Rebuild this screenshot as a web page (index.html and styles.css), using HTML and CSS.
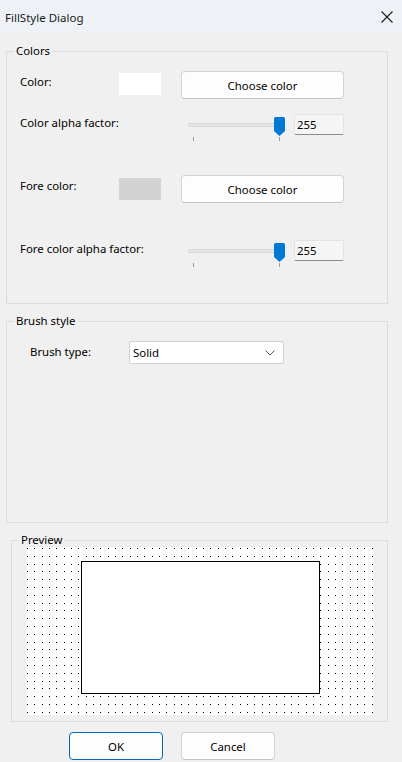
FILE: index.html
```html
<!DOCTYPE html>
<html>
<head>
<meta charset="utf-8">
<link rel="stylesheet" href="styles.css">
</head>
<body>
<div class="window">
  <div class="titlebar">
    <span class="title">FillStyle Dialog</span>
    <svg class="close" width="12" height="12" viewBox="0 0 12 12"><path d="M0.5 0.5 L11.5 11.5 M11.5 0.5 L0.5 11.5" stroke="#1b1b1b" stroke-width="1.1" fill="none"/></svg>
  </div>
  <div class="content">
    <div class="group colors">
      <span class="legend">Colors</span>
      <div class="row row1">
        <span class="label">Color:</span>
        <span class="swatch white"></span>
        <button class="btn choose">Choose color</button>
      </div>
      <div class="row row2">
        <span class="label">Color alpha factor:</span>
        <div class="slider">
          <span class="track"></span>
          <span class="tick t1"></span>
          <span class="tick t2"></span>
          <svg class="thumb" width="11" height="19" viewBox="0 0 11 19"><path d="M0 1.5 Q0 0 1.5 0 H9.5 Q11 0 11 1.5 V14 L5.5 19 L0 14 Z" fill="#0078d4"/></svg>
        </div>
        <span class="numbox">255</span>
      </div>
      <div class="row row3">
        <span class="label">Fore color:</span>
        <span class="swatch gray"></span>
        <button class="btn choose">Choose color</button>
      </div>
      <div class="row row4">
        <span class="label">Fore color alpha factor:</span>
        <div class="slider">
          <span class="track"></span>
          <span class="tick t1"></span>
          <span class="tick t2"></span>
          <svg class="thumb" width="11" height="19" viewBox="0 0 11 19"><path d="M0 1.5 Q0 0 1.5 0 H9.5 Q11 0 11 1.5 V14 L5.5 19 L0 14 Z" fill="#0078d4"/></svg>
        </div>
        <span class="numbox">255</span>
      </div>
    </div>

    <div class="group brush">
      <span class="legend">Brush style</span>
      <div class="row brushrow">
        <span class="label">Brush type:</span>
        <div class="combo">
          <span>Solid</span>
          <svg width="10" height="6" viewBox="0 0 10 6"><path d="M0.5 0.5 L5 5 L9.5 0.5" stroke="#5a5a5a" stroke-width="1" fill="none"/></svg>
        </div>
      </div>
    </div>

    <div class="group preview">
      <span class="legend">Preview</span>
      <div class="canvas">
        <svg class="dots" width="346" height="168">
          <defs>
            <pattern id="dotpat" x="0" y="1" width="22" height="39" patternUnits="userSpaceOnUse">
              <rect x="0" y="0" width="1" height="1" fill="#000"/>
              <rect x="7" y="0" width="1" height="1" fill="#000"/>
              <rect x="15" y="0" width="1" height="1" fill="#000"/>
              <rect x="0" y="8" width="1" height="1" fill="#000"/>
              <rect x="7" y="8" width="1" height="1" fill="#000"/>
              <rect x="15" y="8" width="1" height="1" fill="#000"/>
              <rect x="0" y="16" width="1" height="1" fill="#000"/>
              <rect x="7" y="16" width="1" height="1" fill="#000"/>
              <rect x="15" y="16" width="1" height="1" fill="#000"/>
              <rect x="0" y="23" width="1" height="1" fill="#000"/>
              <rect x="7" y="23" width="1" height="1" fill="#000"/>
              <rect x="15" y="23" width="1" height="1" fill="#000"/>
              <rect x="0" y="31" width="1" height="1" fill="#000"/>
              <rect x="7" y="31" width="1" height="1" fill="#000"/>
              <rect x="15" y="31" width="1" height="1" fill="#000"/>
            </pattern>
          </defs>
          <rect x="0" y="0" width="346" height="168" fill="url(#dotpat)" shape-rendering="crispEdges"/>
        </svg>
        <div class="rect"></div>
      </div>
    </div>

    <div class="buttons">
      <button class="btn dlg ok">OK</button>
      <button class="btn dlg">Cancel</button>
    </div>
  </div>
</div>
</body>
</html>
```
FILE: styles.css
```css
* { box-sizing: border-box; }
html, body {
  margin: 0;
  padding: 0;
  background: #f0f0f0;
}
body {
  font-family: "Noto Sans", "Liberation Sans", sans-serif;
  font-size: 11.4px;
  color: #000;
}
.window {
  width: 402px;
  height: 762px;
  overflow: hidden;
  background: #f0f0f0;
}
.titlebar {
  height: 32px;
  background: #eef2f6;
  display: flex;
  align-items: center;
  justify-content: space-between;
  padding: 0 9px 0 5px;
}
.title {
  color: #1a1a1a;
  font-size: 11.5px;
  margin-top: 2px;
}
.close { margin-top: 1px; }
.content {
  padding: 19px 0 0 6px;
}
.group {
  position: relative;
  border: 1px solid #dcdcdc;
  width: 382px;
}
.legend {
  position: absolute;
  top: -10px;
  left: 7px;
  padding: 0 2px;
  background: #f0f0f0;
  line-height: 18px;
}
.colors {
  height: 253px;
  padding-left: 13px;
}
.row {
  display: flex;
  align-items: flex-start;
}
.label {
  width: 99px;
  line-height: 16px;
  flex: none;
  white-space: nowrap;
}
.row1 { margin-top: 19px; }
.row1 .label, .row3 .label { margin-top: 3px; }
.row2 { margin-top: 14px; }
.row3 { margin-top: 34px; }
.row4 { margin-top: 36px; }
.row2 .label, .row4 .label { margin-top: 2px; }
.swatch {
  width: 42px;
  height: 22px;
  flex: none;
  margin-right: 20px;
}
.swatch.white { background: #ffffff; margin-top: 2px; }
.swatch.gray { background: #d3d3d3; margin-top: 3px; }
.btn {
  font-family: inherit;
  font-size: 11.4px;
  color: #000;
  background: #fdfdfd;
  border: 1px solid #d3d3d3;
  border-bottom-color: #c4c4c4;
  border-radius: 4px;
  padding: 0;
  height: 28px;
}
.choose { width: 163px; }
.slider {
  position: relative;
  width: 100px;
  height: 28px;
  margin-left: 69px;
  flex: none;
}
.track {
  position: absolute;
  left: 0;
  top: 10px;
  width: 96px;
  height: 4px;
  background: #e7e7e7;
  border: 1px solid #d8d8d8;
  border-radius: 2px;
}
.tick {
  position: absolute;
  top: 24px;
  width: 1px;
  height: 4px;
  background: #9c9c9c;
}
.t1 { left: 5px; }
.t2 { left: 91px; }
.thumb {
  position: absolute;
  left: 86px;
  top: 4px;
}
.numbox {
  margin-left: 6px;
  margin-top: 1px;
  width: 50px;
  height: 21px;
  background: #f5f5f5;
  border: 1px solid #e3e3e3;
  border-bottom: 1px solid #8c8c8c;
  border-radius: 2px;
  padding: 0 0 0 2px;
  line-height: 19px;
}
.brush {
  margin-top: 17px;
  height: 202px;
  padding-left: 23px;
}
.brushrow { margin-top: 19px; }
.brushrow .label { margin-top: 3px; }
.combo {
  width: 155px;
  height: 23px;
  background: #fff;
  border: 1px solid #d0d0d0;
  border-radius: 2px;
  display: flex;
  align-items: center;
  justify-content: space-between;
  padding: 0 8px 0 3px;
}
.combo svg { margin-top: 1px; }
.preview {
  margin-top: 17px;
  margin-left: 5px;
  width: 377px;
  height: 182px;
  padding: 6px 14px 0 15px;
}
.canvas {
  position: relative;
  height: 168px;
  background-color: #fff;
  padding: 14px 0 0 54px;
}
.dots {
  position: absolute;
  left: 0;
  top: 0;
}
.rect {
  position: relative;
  width: 239px;
  height: 133px;
  background: #fff;
  border: 1.5px solid #000;
}
.buttons {
  display: flex;
  gap: 18px;
  margin-top: 10px;
  padding-left: 63px;
}
.dlg { width: 94px; }
.ok { border: 1px solid #0067c0; }
```
